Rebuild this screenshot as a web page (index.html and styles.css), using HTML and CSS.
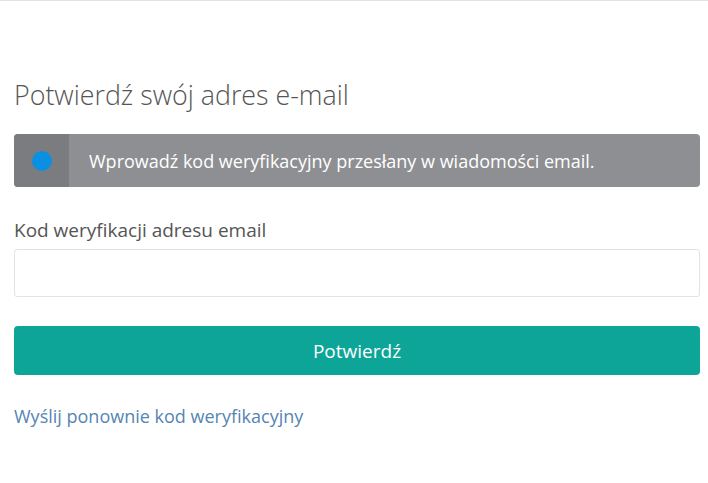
FILE: index.html
```html
<!DOCTYPE html>
<html lang="pl">
<head>
<meta charset="utf-8">
<title>Potwierdź swój adres e-mail</title>
<link rel="stylesheet" href="styles.css">
</head>
<body>
<div class="topline"></div>
<main class="page">
  <h1 class="title">Potwierdź swój adres e-mail</h1>
  <div class="alert">
    <div class="alert-icon"><span class="dot"></span></div>
    <div class="alert-text">Wprowadź kod weryfikacyjny przesłany w wiadomości email.</div>
  </div>
  <form class="form">
    <label class="label" for="code">Kod weryfikacji adresu email</label>
    <input class="input" id="code" type="text">
    <button class="btn" type="button">Potwierdź</button>
  </form>
  <a class="link" href="#">Wyślij ponownie kod weryfikacyjny</a>
</main>
</body>
</html>
```
FILE: styles.css
```css
* { box-sizing: border-box; }
html, body { margin: 0; padding: 0; background: #fff; }
body { font-family: "Open Sans", "DejaVu Sans", sans-serif; color: #555; }
.topline { height: 1px; background: #e2e2e2; }
.page { padding: 0 8px 0 14px; }
.title {
  margin: 76px 0 0;
  font-weight: 300;
  font-size: 26.8px;
  line-height: 36px;
  color: #555;
}
.alert {
  margin-top: 21px;
  display: flex;
  height: 53px;
  background: #8e8f92;
  border-radius: 4px;
  overflow: hidden;
}
.alert-icon {
  width: 55px;
  flex: none;
  background: #7b7c80;
  display: flex;
  align-items: center;
  justify-content: center;
}
.dot { width: 20px; height: 20px; border-radius: 50%; background: #0a90e2; margin-left: 1px; margin-top: 1px; }
.alert-text {
  display: flex;
  align-items: center;
  padding-left: 20px;
  color: #fff;
  font-size: 18px;
}
.form { display: flex; flex-direction: column; margin-top: 30px; }
.label { font-size: 19px; line-height: 26px; color: #555; }
.input {
  margin-top: 6px;
  height: 48px;
  border: 1px solid #e3e3e3;
  border-radius: 3px;
  font: inherit;
  padding: 0 12px;
}
.btn {
  margin-top: 29px;
  height: 49px;
  border: 0;
  border-radius: 4px;
  background: #0ca597;
  color: #fff;
  font-family: inherit;
  font-size: 19px;
}
.link {
  display: block;
  width: max-content;
  margin-top: 28.5px;
  font-size: 18px;
  line-height: 25px;
  color: #5585b2;
  text-decoration: none;
}
```
